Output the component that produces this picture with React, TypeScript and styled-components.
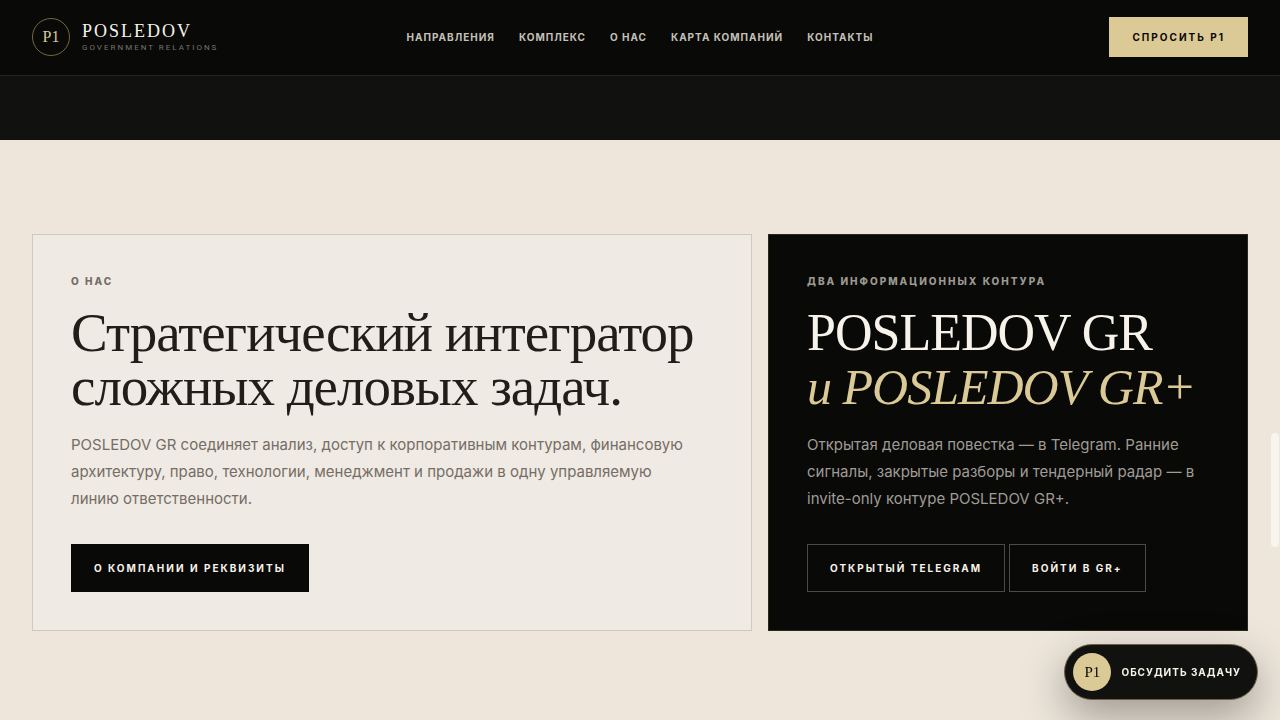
import React from 'react';
import styled, { createGlobalStyle, css } from 'styled-components';

const sans = `Inter, 'Liberation Sans', sans-serif`;
const serif = `'Liberation Serif', serif`;

const c = {
  ink: '#090907',
  graphite: '#11110f',
  sand: '#eee6db',
  paper: '#efeae3',
  gold: '#dbc996',
  ivory: '#f7f2ea',
};

const GlobalStyle = createGlobalStyle`
  *, *::before, *::after { box-sizing: border-box; }
  html { scrollbar-width: none; }
  body {
    margin: 0;
    background: ${c.sand};
    color: #211d18;
    font-family: ${sans};
    font-size: 16px;
  }
  a { color: inherit; text-decoration: none; }
`;

const Header = styled.header`
  position: sticky;
  top: 0;
  z-index: 2;
  display: grid;
  grid-template-columns: 1fr auto 1fr;
  align-items: center;
  height: 76px;
  padding: 0 32px 1px;
  background: ${c.ink};
  border-bottom: 1px solid #242422;
`;

const Brand = styled.a`
  display: flex;
  align-items: center;
  gap: 12px;
  justify-self: start;
`;

const Monogram = styled.span<{ $solid?: boolean }>`
  display: grid;
  place-items: center;
  flex: none;
  width: 38px;
  height: 38px;
  border-radius: 50%;
  font-family: ${serif};
  font-weight: 400;
  letter-spacing: 0;
  ${({ $solid }) =>
    $solid
      ? css`
          background: ${c.gold};
          color: ${c.ink};
          font-size: 15px;
        `
      : css`
          border: 1px solid #75683f;
          color: ${c.gold};
          font-size: 16px;
        `}
`;

const BrandText = styled.span`
  display: flex;
  flex-direction: column;
  gap: 1px;
`;

const BrandName = styled.strong`
  font: 400 18px/20px ${serif};
  letter-spacing: 2px;
  color: ${c.ivory};
`;

const BrandNote = styled.small`
  font-family: Roboto, ${sans};
  font-size: 8px;
  line-height: 12px;
  letter-spacing: 2px;
  text-transform: uppercase;
  color: #76746e;
`;

const Nav = styled.nav`
  display: flex;
  gap: 24px;
`;

const NavLink = styled.a`
  font-size: 10px;
  line-height: 16px;
  font-weight: 700;
  letter-spacing: 1px;
  text-transform: uppercase;
  color: #c5c1b9;
`;

const Button = styled.button<{ $tone: 'gold' | 'dark' | 'outline'; $compact?: boolean }>`
  height: ${({ $compact }) => ($compact ? 40 : 48)}px;
  padding: 0 22px;
  border: 1px solid;
  border-radius: 0;
  font: 700 10px/16px ${sans};
  letter-spacing: 2px;
  text-transform: uppercase;
  white-space: nowrap;
  cursor: pointer;
  ${({ $tone }) =>
    ({
      gold: css`
        background: ${c.gold};
        border-color: ${c.gold};
        color: ${c.ink};
      `,
      dark: css`
        background: ${c.ink};
        border-color: ${c.ink};
        color: ${c.ivory};
      `,
      outline: css`
        background: transparent;
        border-color: #4b4a47;
        color: ${c.ivory};
      `,
    })[$tone]}
`;

const HeaderAction = styled.div`
  justify-self: end;
`;

const DarkBand = styled.div`
  height: 64px;
  background: ${c.graphite};
`;

const Section = styled.section`
  display: grid;
  grid-template-columns: minmax(0, 3fr) minmax(0, 2fr);
  gap: 16px;
  padding: 94px 32px 88px;
`;

const Card = styled.article<{ $dark?: boolean }>`
  padding: 38px;
  border: 1px solid ${({ $dark }) => ($dark ? '#2a281d' : '#d0c9bf')};
  background: ${({ $dark }) => ($dark ? c.ink : c.paper)};
  color: ${({ $dark }) => ($dark ? c.ivory : '#211d18')};
`;

const Eyebrow = styled.p<{ $dark?: boolean }>`
  margin: 0 0 17px;
  font-size: 10px;
  line-height: 16px;
  font-weight: 800;
  letter-spacing: 2px;
  text-transform: uppercase;
  color: ${({ $dark }) => ($dark ? '#9b9892' : '#756d65')};
`;

const Title = styled.h2<{ $dark?: boolean }>`
  margin: 0 0 17px;
  font: 400 ${({ $dark }) => ($dark ? 52 : 55)}px/54px ${serif};
  letter-spacing: -1px;

  em {
    color: ${c.gold};
    font-size: 50px;
    white-space: nowrap;
  }
`;

const Lead = styled.p<{ $dark?: boolean }>`
  max-width: 626px;
  margin: 0 0 32px;
  font-size: 15px;
  line-height: 27px;
  color: ${({ $dark }) => ($dark ? '#9f9c96' : '#756d66')};
`;

const Actions = styled.div`
  display: flex;
  flex-wrap: wrap;
  gap: 4px;
`;

const FloatingChat = styled.button`
  position: fixed;
  right: 22px;
  bottom: 20px;
  z-index: 3;
  display: flex;
  align-items: center;
  gap: 10px;
  height: 56px;
  padding: 0 16px 0 8px;
  border: 1px solid #6b6040;
  border-radius: 28px;
  background: ${c.graphite};
  box-shadow: 0 16px 44px rgba(0, 0, 0, 0.34);
  color: ${c.ivory};
  font: 700 10px/16px ${sans};
  letter-spacing: 1px;
  text-transform: uppercase;
  cursor: pointer;
`;

const ScrollThumb = styled.div`
  position: fixed;
  top: 433px;
  right: 1px;
  z-index: 1;
  width: 8px;
  height: 114px;
  border-radius: 4px;
  background: #f8f4ee;
`;

const links = ['Направления', 'Комплекс', 'О нас', 'Карта компаний', 'Контакты'];

export default function App() {
  return (
    <>
      <GlobalStyle />
      <Header>
        <Brand href="#top">
          <Monogram>P1</Monogram>
          <BrandText>
            <BrandName>POSLEDOV</BrandName>
            <BrandNote>Government Relations</BrandNote>
          </BrandText>
        </Brand>
        <Nav>
          {links.map((label, i) => (
            <NavLink key={label} href={`#section-${i + 1}`}>
              {label}
            </NavLink>
          ))}
        </Nav>
        <HeaderAction>
          <Button type="button" $tone="gold" $compact>
            Спросить P1
          </Button>
        </HeaderAction>
      </Header>
      <DarkBand />
      <main>
        <Section>
          <Card>
            <Eyebrow>О нас</Eyebrow>
            <Title>
              Стратегический интегратор сложных деловых задач.
            </Title>
            <Lead>
              POSLEDOV GR соединяет анализ, доступ к корпоративным контурам, финансовую архитектуру,
              право, технологии, менеджмент и продажи в одну управляемую линию ответственности.
            </Lead>
            <Actions>
              <Button type="button" $tone="dark">
                О компании и реквизиты
              </Button>
            </Actions>
          </Card>
          <Card $dark>
            <Eyebrow $dark>Два информационных контура</Eyebrow>
            <Title $dark>
              POSLEDOV GR
              <br />
              <em>и POSLEDOV GR+</em>
            </Title>
            <Lead $dark>
              Открытая деловая повестка — в Telegram. Ранние сигналы, закрытые разборы и тендерный
              радар — в invite-only контуре POSLEDOV GR+.
            </Lead>
            <Actions>
              <Button type="button" $tone="outline">
                Открытый Telegram
              </Button>
              <Button type="button" $tone="outline">
                Войти в GR+
              </Button>
            </Actions>
          </Card>
        </Section>
      </main>
      <ScrollThumb aria-hidden="true" />
      <FloatingChat type="button">
        <Monogram $solid>P1</Monogram>
        Обсудить задачу
      </FloatingChat>
    </>
  );
}
